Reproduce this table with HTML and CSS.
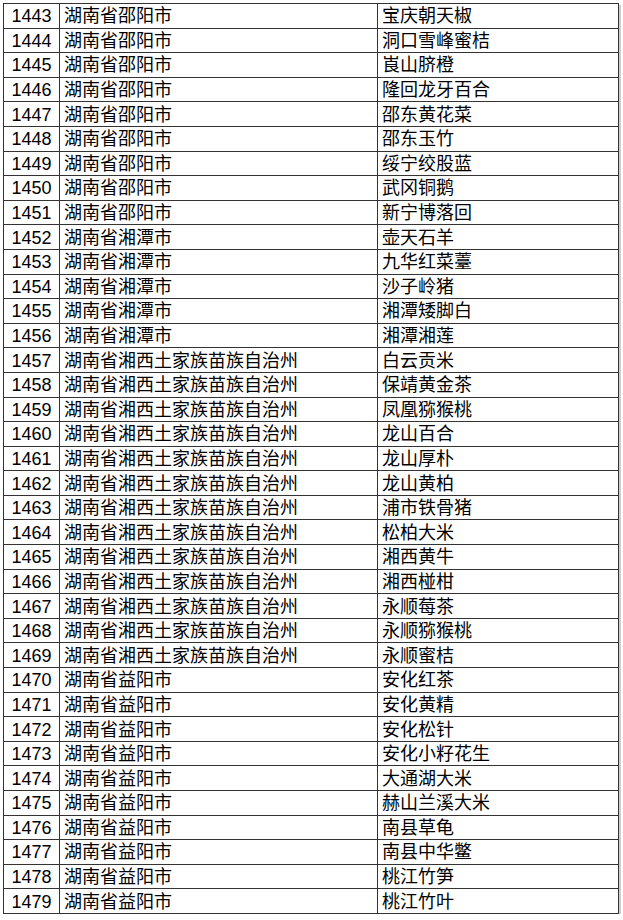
FILE: index.html
```html
<!DOCTYPE html>
<html lang="zh">
<head>
<meta charset="utf-8">
<link rel="stylesheet" href="styles.css">
</head>
<body>
<table class="list">
<colgroup><col class="c-num"><col class="c-region"><col class="c-name"></colgroup>
<tbody>
<tr><td class="num">1443</td><td>湖南省邵阳市</td><td>宝庆朝天椒</td></tr>
<tr><td class="num">1444</td><td>湖南省邵阳市</td><td>洞口雪峰蜜桔</td></tr>
<tr><td class="num">1445</td><td>湖南省邵阳市</td><td>崀山脐橙</td></tr>
<tr><td class="num">1446</td><td>湖南省邵阳市</td><td>隆回龙牙百合</td></tr>
<tr><td class="num">1447</td><td>湖南省邵阳市</td><td>邵东黄花菜</td></tr>
<tr><td class="num">1448</td><td>湖南省邵阳市</td><td>邵东玉竹</td></tr>
<tr><td class="num">1449</td><td>湖南省邵阳市</td><td>绥宁绞股蓝</td></tr>
<tr><td class="num">1450</td><td>湖南省邵阳市</td><td>武冈铜鹅</td></tr>
<tr><td class="num">1451</td><td>湖南省邵阳市</td><td>新宁博落回</td></tr>
<tr><td class="num">1452</td><td>湖南省湘潭市</td><td>壶天石羊</td></tr>
<tr><td class="num">1453</td><td>湖南省湘潭市</td><td>九华红菜薹</td></tr>
<tr><td class="num">1454</td><td>湖南省湘潭市</td><td>沙子岭猪</td></tr>
<tr><td class="num">1455</td><td>湖南省湘潭市</td><td>湘潭矮脚白</td></tr>
<tr><td class="num">1456</td><td>湖南省湘潭市</td><td>湘潭湘莲</td></tr>
<tr><td class="num">1457</td><td>湖南省湘西土家族苗族自治州</td><td>白云贡米</td></tr>
<tr><td class="num">1458</td><td>湖南省湘西土家族苗族自治州</td><td>保靖黄金茶</td></tr>
<tr><td class="num">1459</td><td>湖南省湘西土家族苗族自治州</td><td>凤凰猕猴桃</td></tr>
<tr><td class="num">1460</td><td>湖南省湘西土家族苗族自治州</td><td>龙山百合</td></tr>
<tr><td class="num">1461</td><td>湖南省湘西土家族苗族自治州</td><td>龙山厚朴</td></tr>
<tr><td class="num">1462</td><td>湖南省湘西土家族苗族自治州</td><td>龙山黄柏</td></tr>
<tr><td class="num">1463</td><td>湖南省湘西土家族苗族自治州</td><td>浦市铁骨猪</td></tr>
<tr><td class="num">1464</td><td>湖南省湘西土家族苗族自治州</td><td>松柏大米</td></tr>
<tr><td class="num">1465</td><td>湖南省湘西土家族苗族自治州</td><td>湘西黄牛</td></tr>
<tr><td class="num">1466</td><td>湖南省湘西土家族苗族自治州</td><td>湘西椪柑</td></tr>
<tr><td class="num">1467</td><td>湖南省湘西土家族苗族自治州</td><td>永顺莓茶</td></tr>
<tr><td class="num">1468</td><td>湖南省湘西土家族苗族自治州</td><td>永顺猕猴桃</td></tr>
<tr><td class="num">1469</td><td>湖南省湘西土家族苗族自治州</td><td>永顺蜜桔</td></tr>
<tr><td class="num">1470</td><td>湖南省益阳市</td><td>安化红茶</td></tr>
<tr><td class="num">1471</td><td>湖南省益阳市</td><td>安化黄精</td></tr>
<tr><td class="num">1472</td><td>湖南省益阳市</td><td>安化松针</td></tr>
<tr><td class="num">1473</td><td>湖南省益阳市</td><td>安化小籽花生</td></tr>
<tr><td class="num">1474</td><td>湖南省益阳市</td><td>大通湖大米</td></tr>
<tr><td class="num">1475</td><td>湖南省益阳市</td><td>赫山兰溪大米</td></tr>
<tr><td class="num">1476</td><td>湖南省益阳市</td><td>南县草龟</td></tr>
<tr><td class="num">1477</td><td>湖南省益阳市</td><td>南县中华鳖</td></tr>
<tr><td class="num">1478</td><td>湖南省益阳市</td><td>桃江竹笋</td></tr>
<tr><td class="num">1479</td><td>湖南省益阳市</td><td>桃江竹叶</td></tr>
</tbody>
</table>
</body>
</html>
```

FILE: styles.css
```css
html, body {
  margin: 0;
  padding: 0;
  background: #ffffff;
}

body {
  padding: 3px 0 0 3px;
  font-family: "Liberation Sans", "Noto Sans CJK SC", sans-serif;
  color: #000000;
}

.list {
  border-collapse: collapse;
  table-layout: fixed;
  width: 615px;
  box-shadow: 2px 2px 0 #cfcfcf;
}

.c-num { width: 56px; }
.c-region { width: 318px; }
.c-name { width: 241px; }

.list td {
  border: 1px solid #333333;
  height: 24.6px;
  padding: 1px 0 0 4px;
  font-size: 18px;
  line-height: 22px;
  white-space: nowrap;
  overflow: hidden;
  box-sizing: border-box;
  vertical-align: middle;
}

.list td.num {
  text-align: center;
  padding: 1px 0 0 0;
}
```
